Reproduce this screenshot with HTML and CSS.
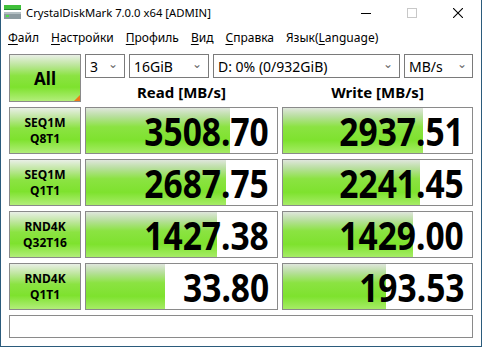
FILE: index.html
```html
<!DOCTYPE html>
<html lang="ru">
<head>
  <meta charset="UTF-8">
  <title>CrystalDiskMark 7.0.0 x64 [ADMIN]</title>
  <link rel="stylesheet" href="styles.css">
</head>
<body>
  <div class="window">
    <div class="titlebar">
      <svg class="app-icon" width="17" height="15" viewBox="0 0 17 15">
        <rect x="0" y="0" width="17" height="4" fill="#3fc03a"/>
        <rect x="0" y="4" width="17" height="1" fill="#1f8a2a"/>
        <rect x="0" y="7" width="17" height="7" fill="#8c9aa0"/>
        <rect x="0" y="7" width="17" height="2" fill="#b4c0c4"/>
        <rect x="2" y="10" width="3" height="2" fill="#4fe04a"/>
      </svg>
      <span class="title">CrystalDiskMark 7.0.0 x64 [ADMIN]</span>
      <div class="controls">
        <div class="ctl">
          <svg width="10" height="10" viewBox="0 0 10 10"><line x1="0" y1="5.5" x2="10" y2="5.5" stroke="#000" stroke-width="1"/></svg>
        </div>
        <div class="ctl">
          <svg width="10" height="10" viewBox="0 0 10 10"><rect x="0.5" y="0.5" width="9" height="9" fill="none" stroke="#c8c8c8" stroke-width="1"/></svg>
        </div>
        <div class="ctl">
          <svg width="10" height="10" viewBox="0 0 10 10"><path d="M0 0 L10 10 M10 0 L0 10" stroke="#000" stroke-width="1.1"/></svg>
        </div>
      </div>
    </div>

    <div class="menubar">
      <span class="menu-item"><u>Ф</u>айл</span>
      <span class="menu-item"><u>Н</u>астройки</span>
      <span class="menu-item"><u>П</u>рофиль</span>
      <span class="menu-item"><u>В</u>ид</span>
      <span class="menu-item"><u>С</u>правка</span>
      <span class="menu-item">Язык(<u>L</u>anguage)</span>
    </div>

    <div class="client">
      <div class="board">
        <div class="all-button">All<span class="corner"></span></div>

        <div class="combos">
          <div class="combo w-count"><span>3</span><span class="chev">&#8964;</span></div>
          <div class="combo w-size"><span>16GiB</span><span class="chev">&#8964;</span></div>
          <div class="combo w-drive"><span>D: 0% (0/932GiB)</span><span class="chev">&#8964;</span></div>
          <div class="combo w-unit"><span>MB/s</span><span class="chev">&#8964;</span></div>
        </div>

        <div class="head">Read [MB/s]</div>
        <div class="head">Write [MB/s]</div>

        <div class="label">SEQ1M<br>Q8T1</div>
        <div class="result" style="--w:144px"><span class="num">3508.70</span></div>
        <div class="result" style="--w:140px"><span class="num">2937.51</span></div>

        <div class="label">SEQ1M<br>Q1T1</div>
        <div class="result" style="--w:140px"><span class="num">2687.75</span></div>
        <div class="result" style="--w:137px"><span class="num">2241.45</span></div>

        <div class="label">RND4K<br>Q32T16</div>
        <div class="result" style="--w:131px"><span class="num">1427.38</span></div>
        <div class="result" style="--w:130px"><span class="num">1429.00</span></div>

        <div class="label">RND4K<br>Q1T1</div>
        <div class="result" style="--w:79px"><span class="num">33.80</span></div>
        <div class="result" style="--w:103px"><span class="num">193.53</span></div>

        <div class="comment"></div>
      </div>
    </div>
  </div>
</body>
</html>
```

FILE: styles.css
```css
html, body {
  margin: 0;
  padding: 0;
  background: #fff;
}

body {
  font-family: "Noto Sans", "Open Sans", sans-serif;
  color: #000;
}

.window {
  width: 482px;
  height: 347px;
  box-sizing: border-box;
  border: 1px solid #2b5b7c;
  border-top: none;
  background: #fff;
  overflow: hidden;
}

.titlebar {
  height: 27px;
  display: flex;
  align-items: center;
}

.app-icon {
  margin-left: 3px;
  margin-top: -2px;
}

.title {
  margin-left: 5px;
  font-size: 11.3px;
  flex: 1;
  margin-top: -2px;
}

.controls {
  display: flex;
  height: 27px;
}

.ctl {
  width: 46px;
  display: flex;
  align-items: center;
  justify-content: center;
  margin-top: -2px;
}

.menubar {
  height: 20px;
  display: flex;
  align-items: center;
  font-size: 12px;
  padding-left: 1px;
}

.menu-item {
  padding: 0 6px;
}

.menu-item u {
  text-decoration-thickness: 1px;
  text-underline-offset: 2px;
}

.client {
  padding: 7px 0 0 8px;
}

.board {
  display: grid;
  grid-template-columns: 72px 193px 191px;
  grid-template-rows: 24px 19px repeat(4, 47px) 23px;
  column-gap: 4px;
  row-gap: 5px;
}

.all-button {
  grid-row: 1 / 3;
  position: relative;
  box-sizing: border-box;
  border: 1px solid #8a8a8a;
  background: linear-gradient(to bottom, #e9efe6 0%, #bde69c 22%, #8be342 45%, #7ee22e 70%, #b2ee7a 100%);
  display: flex;
  align-items: center;
  justify-content: center;
  font-weight: bold;
  font-size: 17px;
}

.corner {
  position: absolute;
  right: 0;
  bottom: 0;
  width: 0;
  height: 0;
  border-left: 6px solid transparent;
  border-bottom: 6px solid #f07818;
}

.combos {
  grid-column: 2 / 4;
  display: flex;
  gap: 4px;
}

.combo {
  box-sizing: border-box;
  border: 1px solid #7a7a7a;
  display: flex;
  align-items: center;
  justify-content: space-between;
  padding: 0 6px 0 4px;
  font-size: 14px;
  white-space: nowrap;
}

.chev {
  color: #6a6a6a;
  font-size: 12px;
  font-family: "DejaVu Sans", sans-serif;
  margin-top: -4px;
}

.w-count { width: 40px; }
.w-size { width: 80px; }
.w-drive { width: 187px; }
.w-unit { width: 69px; padding-right: 5px; }

.head {
  text-align: center;
  font-weight: bold;
  font-size: 15px;
  line-height: 19px;
}

.label {
  box-sizing: border-box;
  border: 1px solid #8a8a8a;
  background: linear-gradient(to bottom, #e9efe6 0%, #bde69c 22%, #8be342 45%, #7ee22e 70%, #b2ee7a 100%);
  display: flex;
  align-items: center;
  justify-content: center;
  text-align: center;
  font-weight: bold;
  font-size: 12px;
  line-height: 16px;
}

.result {
  box-sizing: border-box;
  border: 1px solid #8a8a8a;
  background: linear-gradient(to bottom, #dfe6dc 0%, #b9dfa0 18%, #8be342 42%, #7ee22e 72%, #a6ec66 100%) no-repeat, #fff;
  background-size: var(--w) 100%, auto;
  display: flex;
  align-items: center;
  justify-content: flex-end;
  padding-right: 8px;
}

.num {
  display: inline-block;
  font-weight: bold;
  font-size: 39px;
  line-height: 40px;
  transform: scaleX(0.86);
  transform-origin: right center;
}

.comment {
  grid-column: 1 / 4;
  box-sizing: border-box;
  border: 1px solid #8a8a8a;
  background: #fff;
}
```
